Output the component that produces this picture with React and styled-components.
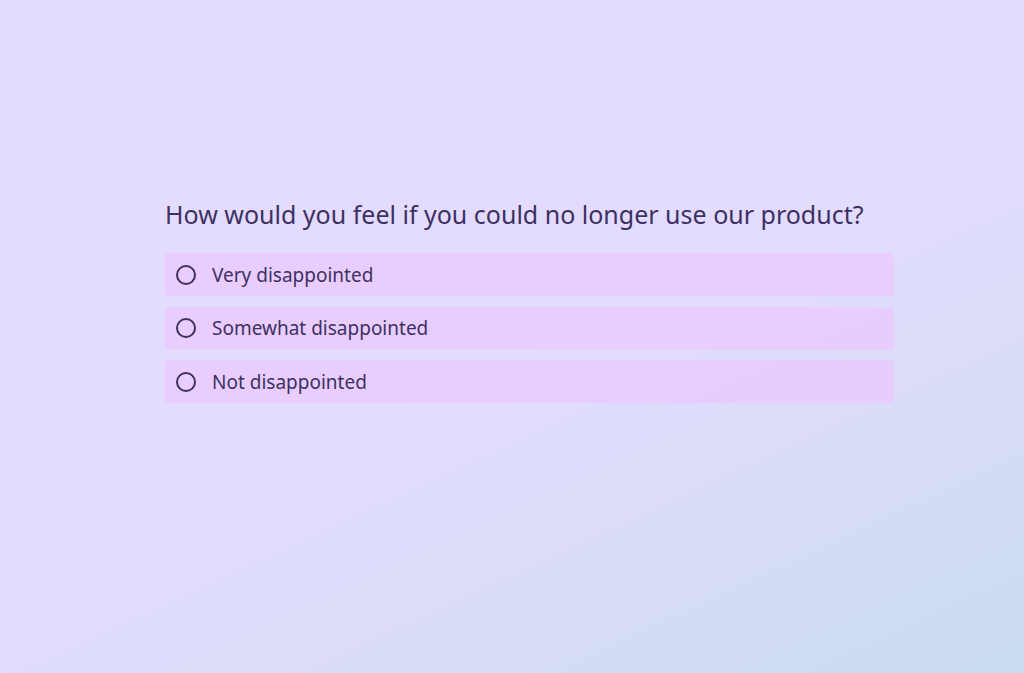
import styled, { createGlobalStyle } from "styled-components";

const GlobalStyle = createGlobalStyle`
  html, body {
    margin: 0;
    padding: 0;
  }
  body {
    font-family: "Noto Sans", "Open Sans", sans-serif;
  }
`;

const Page = styled.div`
  width: 1024px;
  height: 673px;
  box-sizing: border-box;
  background: linear-gradient(155deg, #e3dcff 0%, #e3dcff 50%, #d8dcf6 75%, #c9dcef 100%);
  padding: 196px 130px 0 165px;
`;

const Survey = styled.div`
  width: 729px;
  display: flex;
  flex-direction: column;
`;

const Question = styled.h1`
  margin: 0 0 20px;
  font-size: 25px;
  font-weight: 400;
  line-height: 37px;
  color: #3d3163;
`;

const Options = styled.div`
  display: flex;
  flex-direction: column;
  gap: 10.5px;
`;

const Option = styled.label`
  display: flex;
  align-items: center;
  gap: 16px;
  height: 43px;
  padding: 0 11px;
  border-radius: 4px;
  background: rgba(236, 196, 255, 0.65);
  cursor: pointer;
  font-size: 19px;
  color: #3d3163;
`;

const Radio = styled.span`
  width: 16px;
  height: 16px;
  border: 2px solid #3d3163;
  border-radius: 50%;
  flex-shrink: 0;
`;

const choices = ["Very disappointed", "Somewhat disappointed", "Not disappointed"];

const App = () => (
  <>
    <GlobalStyle />
    <Page>
      <Survey>
        <Question>How would you feel if you could no longer use our product?</Question>
        <Options>
          {choices.map((c) => (
            <Option key={c}>
              <Radio />
              {c}
            </Option>
          ))}
        </Options>
      </Survey>
    </Page>
  </>
);

export default App;
